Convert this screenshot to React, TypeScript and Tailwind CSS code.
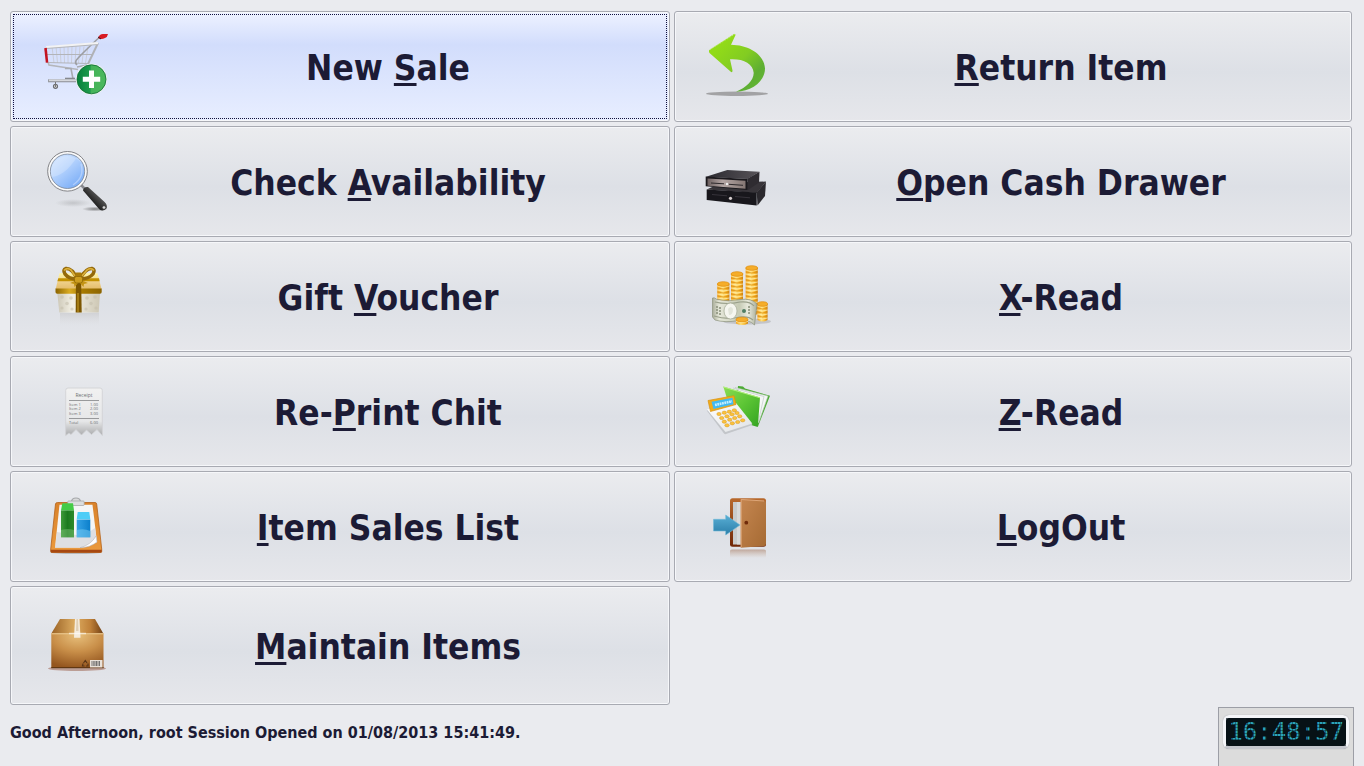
import type { ReactNode } from 'react';
import clsx from 'clsx';

function Icon({ children }: { children: ReactNode }) {
  return (
    <svg viewBox="0 0 66 65" className="w-[66px] h-[65px] shrink-0 overflow-visible" aria-hidden="true">
      {children}
    </svg>
  );
}

function CartIcon() {
  return (
    <Icon>
      <defs>
        <linearGradient id="cartPlus" x1="0" x2="1">
          <stop offset="0" stopColor="#07803b" />
          <stop offset="0.45" stopColor="#1f9c4c" />
          <stop offset="0.5" stopColor="#45b35a" />
          <stop offset="1" stopColor="#4cb95c" />
        </linearGradient>
      </defs>
      <g fill="none" strokeWidth="0.8">
        {[9, 13, 17, 21, 25, 29, 33, 37, 41, 45].map((x) => (
          <path key={x} d={`M${x} 12.5L${x - (x - 25) / 8} 29`} stroke="#c6c8ce" />
        ))}
        <path d="M4 20.5H50M4 28.5L45 29.5" stroke="#b2b4b9" strokeWidth="1.2" />
        <path d="M5 28L6 31L35 35.5" stroke="#b4b6bb" strokeWidth="1.6" />
        <path d="M55 9L45 30" stroke="#b0b2b7" strokeWidth="2" />
        <path d="M58 2C52 7 44 15 38 21C33 26 31 28 34 31" stroke="#9c9ea3" strokeWidth="1.6" />
        <path d="M22 34.5H28L30 45M34 33L44 31" stroke="#a8aaaf" strokeWidth="1.6" />
        <path d="M22 44.5H32" stroke="#85888e" strokeWidth="1.6" />
      </g>
      <path d="M3 13.7L55 9.7" stroke="#b4b6bb" strokeWidth="2.6" />
      <path d="M3 13L55 9" stroke="#f3f3f4" strokeWidth="1.8" />
      <path d="M5 46.8H36" stroke="#989ba1" strokeWidth="3" />
      <path d="M6 46.3H36" stroke="#d6d8dd" strokeWidth="1.6" />
      <path d="M1.2 14.2L3.8 13.8L5.3 28.4L2.8 28.8Z" fill="#c31320" />
      <path d="M55 4Q56.5 0 60 0H65Q64.5 3 62 4Q58 6 55 4Z" fill="#d81a22" />
      <path d="M55 3L58 5" stroke="#3c1a20" />
      <circle cx="12.5" cy="52.3" r="2" fill="#e6e6e6" stroke="#6b6d72" strokeWidth="1.2" />
      <path d="M12.5 48V53" stroke="#777" />
      <circle cx="48.5" cy="45.3" r="15.6" fill="#eef3ee" />
      <circle cx="48.5" cy="45.3" r="14.5" fill="url(#cartPlus)" stroke="#0c6b31" strokeWidth="0.8" />
      <path d="M46 36.5H51V42.7H57.2V47.7H51V54H46V47.7H39.8V42.7H46Z" fill="#fff" />
    </Icon>
  );
}

function SearchIcon() {
  return (
    <Icon>
      <defs>
        <linearGradient id="lens" x1="0" y1="0" x2="0.8" y2="1">
          <stop offset="0" stopColor="#dcebff" />
          <stop offset="0.45" stopColor="#b4d2fd" />
          <stop offset="1" stopColor="#72a8f6" />
        </linearGradient>
        <linearGradient id="lensHandle" x1="0" y1="1" x2="1" y2="0">
          <stop offset="0.3" stopColor="#111" />
          <stop offset="0.6" stopColor="#4c4c4c" />
          <stop offset="1" stopColor="#1c1c1c" />
        </linearGradient>
        <radialGradient id="lensShadow">
          <stop offset="0" stopColor="#555" stopOpacity="0.7" />
          <stop offset="1" stopColor="#555" stopOpacity="0" />
        </radialGradient>
      </defs>
      <ellipse cx="30" cy="54" rx="18" ry="4" fill="url(#lensShadow)" opacity="0.3" />
      <ellipse cx="52" cy="60" rx="13" ry="2.5" fill="url(#lensShadow)" />
      <path d="M38 36L43 41" stroke="#888a90" strokeWidth="2.5" />
      <path d="M40 41.5Q40.5 37.5 45 38L61 52.5Q65 56 63.5 59.5Q60 63 56.5 60.5Z" fill="url(#lensHandle)" />
      <circle cx="61" cy="58.5" r="1.8" fill="#d8d8d8" stroke="#333" strokeWidth="0.8" />
      <circle cx="24.5" cy="22.3" r="18.4" fill="url(#lens)" stroke="#fbfbfb" strokeWidth="2.4" />
      <circle cx="24.5" cy="22.3" r="19.8" fill="none" stroke="#77777a" strokeWidth="0.9" />
      <circle cx="24.5" cy="22.3" r="17.2" fill="none" stroke="#7b8594" strokeWidth="0.8" />
      <path d="M8 28Q22 27 34 8Q40 14 41 20A17 17 0 0 0 8 20Z" fill="#fff" opacity="0.22" />
      <path d="M38 15Q42 28 30 36" fill="none" stroke="#d5e6ff" strokeWidth="1.5" opacity="0.5" />
    </Icon>
  );
}

function GiftIcon() {
  return (
    <Icon>
      <defs>
        <linearGradient id="giftGold" x1="0" x2="1">
          <stop offset="0" stopColor="#8c6400" />
          <stop offset="0.3" stopColor="#d9ab22" />
          <stop offset="0.6" stopColor="#a67900" />
          <stop offset="1" stopColor="#8d6500" />
        </linearGradient>
        <linearGradient id="giftLid" x1="0" y1="0" x2="0" y2="1">
          <stop offset="0" stopColor="#fff6a8" />
          <stop offset="0.5" stopColor="#f0d28c" />
          <stop offset="1" stopColor="#e4bd6c" />
        </linearGradient>
        <linearGradient id="giftBody" x1="0" x2="1">
          <stop offset="0" stopColor="#cdc8b8" />
          <stop offset="0.35" stopColor="#f3f0e5" />
          <stop offset="1" stopColor="#cdc7b4" />
        </linearGradient>
        <linearGradient id="giftReflect" x1="0" y1="0" x2="0" y2="1">
          <stop offset="0" stopColor="#c8c8ca" stopOpacity="0.6" />
          <stop offset="0.8" stopColor="#d8d8d8" stopOpacity="0" />
        </linearGradient>
      </defs>
      <path d="M17 49H56V64H17Z" fill="url(#giftReflect)" />
      <path d="M14.3 29H57L55.7 48.5H16.3Z" fill="url(#giftBody)" />
      <g fill="#c6c0ae" opacity="0.6">
        <circle cx="19" cy="33" r="1.8" />
        <circle cx="28" cy="34" r="1.8" />
        <circle cx="24" cy="39.5" r="1.8" />
        <circle cx="19" cy="44" r="1.6" />
        <circle cx="29" cy="45" r="1.6" />
        <circle cx="44" cy="34" r="1.8" />
        <circle cx="52" cy="33" r="1.8" />
        <circle cx="48" cy="39.5" r="1.8" />
        <circle cx="43" cy="45" r="1.6" />
        <circle cx="53" cy="44" r="1.6" />
      </g>
      <path d="M16.5 9.3H54.5L58.5 25H12.7Z" fill="url(#giftLid)" />
      <path d="M15.3 14.2H56L56.7 17.2H14.4Z" fill="#c29100" />
      <path d="M12.5 24.5H58.7V28Q58.7 29.8 57 29.8H14.2Q12.5 29.8 12.5 28Z" fill="url(#giftGold)" />
      <path d="M33 9H38L38.7 48.5H32.7Z" fill="#7c5600" />
      <path d="M34 29H36V48H34Z" fill="#a27a14" />
      <g fill="none" stroke="#94690a" strokeWidth="3.6">
        <path d="M34 14.5Q29 4 23 4.5Q19.5 5.5 22 10Q25.500 15 34 15" />
        <path d="M37 14.5Q43 4 49 4.5Q52.5 5.5 50 10Q46 15 37 15" />
      </g>
      <g fill="none" stroke="#dbb03a" strokeWidth="1.6">
        <path d="M21 6.5Q24 3 28 6L32 12M51 6.5Q48 3 44 6L39 12" />
      </g>
      <path d="M34 16L27 19L31 20L31.5 23L36 18L40.5 23L41 20L45 19L38 16Z" fill="#c49415" />
      <rect x="32.5" y="8.5" width="6" height="4" rx="1" fill="#a87a08" />
      <rect x="31.5" y="12.5" width="8" height="6.5" rx="2" fill="#cc9d1f" stroke="#8f6806" strokeWidth="0.8" />
    </Icon>
  );
}

function ReceiptIcon() {
  return (
    <Icon>
      <defs>
        <linearGradient id="receipt" x1="0" y1="0" x2="0" y2="1">
          <stop offset="0" stopColor="#f1f1f1" />
          <stop offset="0.7" stopColor="#e6e7e8" />
          <stop offset="1" stopColor="#a9aaac" />
        </linearGradient>
      </defs>
      <path
        d="M25 9H57Q59.3 9 59.3 11.5V56.5L54 50.5L48.5 55.5L43.5 51L38.5 56L33 50.5L28 55.5L26 54L22.7 56.5V11.5Q22.7 9 25 9Z"
        fill="url(#receipt)"
        stroke="#cfd0d3"
        strokeWidth="0.8"
      />
      <path d="M26 21.5H56M26 39.5H56" stroke="#8e9092" strokeWidth="0.9" />
      <g fill="#6d6f72" fontFamily="Open Sans, sans-serif">
        <text x="41" y="18" fontSize="5" textAnchor="middle">Receipt</text>
        <g fontSize="4">
          <text x="26" y="27">Item 1</text>
          <text x="55" y="27" textAnchor="end">1.00</text>
          <text x="26" y="31">Item 2</text>
          <text x="55" y="31" textAnchor="end">2.00</text>
          <text x="26" y="36">Item 3</text>
          <text x="55" y="36" textAnchor="end">3.00</text>
          <text x="26" y="45">Total</text>
          <text x="55" y="45" textAnchor="end">6.00</text>
        </g>
      </g>
    </Icon>
  );
}

function SalesListIcon() {
  return (
    <Icon>
      <defs>
        <linearGradient id="board" x1="0" y1="0" x2="0" y2="1">
          <stop offset="0" stopColor="#d9822a" />
          <stop offset="1" stopColor="#eb9a3e" />
        </linearGradient>
        <linearGradient id="greenBar" x1="0" x2="1">
          <stop offset="0" stopColor="#3f9a3a" />
          <stop offset="0.5" stopColor="#1d7a1f" />
          <stop offset="1" stopColor="#2e8a2b" />
        </linearGradient>
        <linearGradient id="blueBar" x1="0" x2="1">
          <stop offset="0" stopColor="#36a3e6" />
          <stop offset="1" stopColor="#0b7fcb" />
        </linearGradient>
      </defs>
      <ellipse cx="33" cy="58.5" rx="26" ry="1.5" fill="#777" opacity="0.4" />
      <path d="M14.5 8.5H52Q53.5 8.5 53.7 10L58.7 55V57.5Q58.7 58.5 57.5 58.5H9Q7.7 58.5 7.7 57.5V55L12.5 10Q12.7 8.5 14.5 8.5Z" fill="url(#board)" stroke="#b4621a" strokeWidth="0.8" />
      <path d="M7.7 55.8H58.7V57.5Q58.7 58.5 57.5 58.5H9Q7.7 58.5 7.7 57.5Z" fill="#a74812" />
      <path d="M16.5 10.7H49.5L54 48Q46 53 37 53.7H12Z" fill="#f4f5f6" />
      <path d="M14 38L12 53.7H37Q46 53 54 48L52 34L40 42Z" fill="#cfd1d6" opacity="0.6" />
      <path d="M53 42L54 48Q47 53.5 37 53.7Q48 51 53 42Z" fill="#fff" stroke="#b6b6bb" strokeWidth="0.6" />
      <path d="M28.5 7.5Q29 4 33 4Q37 4 37.5 7.5Z" fill="#d9dadb" stroke="#a6a8aa" strokeWidth="1.2" />
      <rect x="24.7" y="7" width="16.5" height="4.5" rx="1" fill="#dbddde" stroke="#a0a2a4" strokeWidth="0.7" />
      <path d="M18 16.3H31V43.3H18Z" fill="url(#greenBar)" />
      <path d="M19.3 9.3H30L31 16.3H18Z" fill="#44cb46" />
      <path d="M18 36Q25 34 31 36V43.3H18Z" fill="#8fce88" opacity="0.4" />
      <path d="M33.7 25.5H47.3V43.3H33.7Z" fill="url(#blueBar)" />
      <path d="M34.7 18H46.3L47.3 25.3H33.7Z" fill="#4fcdf7" />
      <path d="M33.7 36Q41 34 47.3 37V43.3H33.7Z" fill="#7ed0f4" opacity="0.5" />
    </Icon>
  );
}

function BoxIcon() {
  return (
    <Icon>
      <defs>
        <radialGradient id="boxFront" cx="0.5" cy="0.05" r="0.95">
          <stop offset="0" stopColor="#e8c07c" />
          <stop offset="0.5" stopColor="#c98f49" />
          <stop offset="1" stopColor="#94561f" />
        </radialGradient>
        <linearGradient id="boxTop" x1="0" x2="1">
          <stop offset="0" stopColor="#9a6225" />
          <stop offset="0.45" stopColor="#dcab60" />
          <stop offset="0.75" stopColor="#c08139" />
          <stop offset="1" stopColor="#703f14" />
        </linearGradient>
      </defs>
      <ellipse cx="34" cy="55.5" rx="29" ry="2.5" fill="#8d4a30" opacity="0.45" />
      <path d="M17 6H52L60.3 20.5H8.3Z" fill="url(#boxTop)" />
      <path d="M8.3 20.3H60.5V55H8.3Z" fill="url(#boxFront)" />
      <path d="M8.3 20.8H60.5" stroke="#ecc88e" strokeWidth="1" />
      <path d="M8.3 54.7H60.5" stroke="#55300f" strokeWidth="1" />
      <path d="M32 6H36.5L37.5 24.7H31Z" fill="#f5ecdd" />
      <path d="M33.5 6H35L35.5 18H33Z" fill="#e0cfb5" />
      <path d="M26 20.5H43" stroke="#fff" strokeWidth="1.5" opacity="0.6" />
      <rect x="47" y="47" width="12.5" height="7.5" fill="#e9e2da" />
      <path d="M49 48V53M50.8 48V53M52 48V53M53.5 48V53M55 48V53M56.5 48V53" stroke="#666" strokeWidth="0.9" />
      <path d="M40.5 50L42.3 47.5L44 50M45 50.5L45 53H43M41.5 53H39.5L40 50.5" fill="none" stroke="#5a3516" strokeWidth="1.2" />
    </Icon>
  );
}

function ReturnIcon() {
  return (
    <Icon>
      <defs>
        <linearGradient id="returnArrow" x1="0.2" y1="0.2" x2="0.9" y2="0.9">
          <stop offset="0" stopColor="#92db18" />
          <stop offset="0.45" stopColor="#82cc22" />
          <stop offset="0.8" stopColor="#5eae33" />
          <stop offset="1" stopColor="#62b535" />
        </linearGradient>
      </defs>
      <ellipse cx="30" cy="59.7" rx="31" ry="2.2" fill="#a2a2a4" />
      <path
        d="M2.3 16L27 0Q29 -0.5 28.3 1.5L24 10.7C42 11 57 20 58 34.5C58 47 45 57.5 29 57.7C39 53.5 46.5 47 46.7 39C46 29 36 24.5 23 25.2L25.5 36.5Q25.5 39.5 23.5 37.5L2.5 19Q1.5 17 2.3 16Z"
        fill="url(#returnArrow)"
      />
      <path d="M3 15.5L28 0" stroke="#c9ee8c" strokeWidth="0.9" strokeDasharray="1 1" />
    </Icon>
  );
}

function DrawerIcon() {
  return (
    <Icon>
      <defs>
        <linearGradient id="drawerSteel" x1="0" x2="1">
          <stop offset="0" stopColor="#6d6161" />
          <stop offset="0.4" stopColor="#b3a5a3" />
          <stop offset="1" stopColor="#857774" />
        </linearGradient>
        <linearGradient id="drawerTop" x1="0" x2="1">
          <stop offset="0" stopColor="#2b2a30" />
          <stop offset="1" stopColor="#575358" />
        </linearGradient>
      </defs>
      <path d="M-0.3 40.5L14 34L59 32.5L49.7 44Z" fill="#38353a" />
      <path d="M49.7 43.5L59 32.5L58 47L50.5 56.5Z" fill="#2b292e" />
      <path d="M-0.3 40.5L49.7 43.5V56.5L-0.3 51Z" fill="#18171c" />
      <path d="M5 45.5L20 46.8M28 47.5L43 48.8" stroke="#36333a" strokeWidth="1" />
      <circle cx="23.5" cy="49.3" r="1.6" fill="#d8d0d0" />
      <path d="M-1 27.7L20.3 21L52.5 22.7L40.3 30Z" fill="url(#drawerTop)" />
      <path d="M40.3 29.7L52.5 22.7L52 33.5L41 41Z" fill="#2f2c31" />
      <path d="M-1.3 27.5L40.5 30V41L-1.3 37.3Z" fill="#1b191d" />
      <path d="M0.5 29.5L38.5 31.8V39.8L0.5 36.8Z" fill="url(#drawerSteel)" />
      <path d="M4 34L17 34.8M22 35.3L36 36.3" stroke="#2d292c" strokeWidth="1" />
      <circle cx="20" cy="35" r="1.2" fill="#eee" />
    </Icon>
  );
}

const coinStacks = [
  { x: 38.7, y: 2, h: 48 },
  { x: 24, y: 8, h: 34 },
  { x: 10.3, y: 18, h: 22 },
];

function CoinStack({ x, y, h, w = 12 }: { x: number; y: number; h: number; w?: number }) {
  return (
    <g>
      <path d={`M${x} ${y + 2}V${y + h}Q${x + w / 2} ${y + h + 3} ${x + w} ${y + h}V${y + 2}Z`} fill="url(#coinSide)" />
      {Array.from({ length: Math.floor((h - 3) / 2) }, (_, i) => (
        <path
          key={i}
          d={`M${x} ${y + 4 + i * 2}Q${x + w / 2} ${y + 6 + i * 2} ${x + w} ${y + 4 + i * 2}`}
          fill="none"
          stroke={i % 2 ? '#dd8f12' : '#fff0b0'}
          strokeWidth="0.8"
        />
      ))}
      <ellipse cx={x + w / 2} cy={y + 2} rx={w / 2} ry="2.3" fill="#f5ad2a" stroke="#e08c0c" strokeWidth="0.7" />
    </g>
  );
}

function MoneyIcon() {
  return (
    <Icon>
      <defs>
        <linearGradient id="coinSide" x1="0" x2="1">
          <stop offset="0" stopColor="#f3a11a" />
          <stop offset="0.4" stopColor="#ffe079" />
          <stop offset="0.75" stopColor="#f9b92f" />
          <stop offset="1" stopColor="#c97a0b" />
        </linearGradient>
        <linearGradient id="bill" x1="0" x2="1">
          <stop offset="0" stopColor="#a8ac99" />
          <stop offset="0.15" stopColor="#e6e8da" />
          <stop offset="0.6" stopColor="#c5cab4" />
          <stop offset="0.8" stopColor="#e9ebde" />
          <stop offset="1" stopColor="#aaae99" />
        </linearGradient>
      </defs>
      <ellipse cx="40" cy="57.5" rx="24" ry="3" fill="#8b8d92" opacity="0.35" />
      {coinStacks.map((s) => (
        <CoinStack key={s.x} {...s} />
      ))}
      <CoinStack x={50.5} y={38} h={18} w={10} />
      <path d="M5.5 34Q7 33 10 35.5Q22 38 33 35.5Q45 34 50 40L47.5 61Q42 55 32 56.5Q18 59 8 56L5.5 53Z" fill="url(#bill)" stroke="#8d927c" strokeWidth="0.7" />
      <path d="M8 38Q20 41 33 38Q43 37 47 42M7 52Q20 56 33 53Q42 52 46 56" fill="none" stroke="#9aa08b" strokeWidth="1.2" />
      <ellipse cx="23.5" cy="47" rx="6.5" ry="8" fill="#f5f6ef" stroke="#a1a690" strokeWidth="0.7" />
      <path d="M21 45Q24 41 26 45Q26 51 22 51Z" fill="#e2e5da" />
      <circle cx="37" cy="47" r="2" fill="#507d62" />
      <path d="M10 42V50M13 43V51M42 42V51" stroke="#888e7a" strokeWidth="1.5" strokeDasharray="2 1" />
      <CoinStack x={29} y={53.5} h={6} />
    </Icon>
  );
}

const calcKeys = [
  [12, 35], [17.3, 33.7], [22.3, 32.7], [27.3, 31.3],
  [14.7, 39], [20, 37.3], [25, 35.3], [30, 34],
  [17.3, 42.7], [22.7, 40.7], [27.7, 39], [32.7, 37.3],
  [20, 46.3], [25.3, 44.3], [30.7, 43], [35.7, 41.3],
];

function CalculatorIcon() {
  return (
    <Icon>
      <defs>
        <linearGradient id="folder" x1="0" y1="0" x2="1" y2="1">
          <stop offset="0" stopColor="#8bdd52" />
          <stop offset="0.5" stopColor="#5cc535" />
          <stop offset="1" stopColor="#33a322" />
        </linearGradient>
        <linearGradient id="calcBody" x1="0" y1="0" x2="1" y2="1">
          <stop offset="0" stopColor="#ffffff" />
          <stop offset="1" stopColor="#dfe2e5" />
        </linearGradient>
      </defs>
      <path d="M31 7L36 7.5L38 9.5L63 16.7L51 47.5L30 15Z" fill="#4cab34" />
      <path d="M28 8.5L61 17L51.5 44L40 20Z" fill="#f4f7f6" stroke="#b5c7b5" strokeWidth="0.6" />
      <path d="M26 9L57 17.5L51.5 42" fill="none" stroke="#c8cfce" strokeWidth="0.8" />
      <path d="M16.3 7.5L53 18.5L50.8 48L44 46L22 26Z" fill="url(#folder)" />
      <path d="M16.3 8L53 18.8" stroke="#b4f07f" strokeWidth="1" />
      <path d="M-0.3 31.5L29 25L45.5 46L19 55Q18 55.5 17 54.5Z" fill="#c3c6ca" />
      <path d="M0 30.5L29 24L45.3 44.5L18.5 53Z" fill="url(#calcBody)" />
      <path d="M1 21.5L27 16.7L29 25.5L3.5 32.5Z" fill="#f1ab19" stroke="#d8900f" strokeWidth="0.7" />
      <path d="M4.5 22.8L25.5 18.8L26.5 25.3L6.5 30Z" fill="#42b9f2" />
      <path d="M8 26L25 22.3" stroke="#c4efff" strokeWidth="2.6" strokeDasharray="1.8 0.6" />
      {calcKeys.map(([x, y]) => (
        <ellipse key={`${x}-${y}`} cx={x} cy={y} rx="2.2" ry="1.6" fill="#fbc23c" stroke="#d9981c" strokeWidth="0.5" />
      ))}
    </Icon>
  );
}

function DoorIcon() {
  return (
    <Icon>
      <defs>
        <linearGradient id="door" x1="0" y1="0" x2="1" y2="1">
          <stop offset="0" stopColor="#c58650" />
          <stop offset="1" stopColor="#a56a33" />
        </linearGradient>
        <linearGradient id="doorFrame" x1="0" y1="0" x2="0" y2="1">
          <stop offset="0" stopColor="#b8692c" />
          <stop offset="1" stopColor="#702606" />
        </linearGradient>
        <linearGradient id="doorArrow" x1="0" y1="0" x2="0" y2="1">
          <stop offset="0" stopColor="#59afd5" />
          <stop offset="1" stopColor="#2b7ea9" />
        </linearGradient>
        <linearGradient id="doorReflect" x1="0" y1="0" x2="0" y2="1">
          <stop offset="0" stopColor="#a98069" stopOpacity="0.6" />
          <stop offset="1" stopColor="#c9a890" stopOpacity="0" />
        </linearGradient>
      </defs>
      <path d="M23 64V57Q23 55.5 25 55.5H57Q59 55.5 59 57V64Z" fill="url(#doorReflect)" />
      <rect x="23" y="4.3" width="36" height="48.5" rx="2.5" fill="url(#doorFrame)" />
      <rect x="26" y="8" width="10" height="42.5" fill="#c9cbcb" />
      <path d="M30 8H34V50.5H30Z" fill="#d8dada" />
      <path d="M33.7 5L57 6.5Q59 6.5 59 9V49.5Q59 52 57 52L33.7 53.7Z" fill="url(#door)" />
      <path d="M34.2 53V5.5L57 7" fill="none" stroke="#dda678" strokeWidth="1" />
      <circle cx="39.3" cy="28.7" r="1.9" fill="#702b0b" />
      <path d="M6.5 25.3H18.7V21L33 31L18.7 41V37H6.5Z" fill="url(#doorArrow)" stroke="#6fb9d8" strokeWidth="0.6" />
    </Icon>
  );
}

type MenuItem = { before?: string; hotkey: string; after: string; icon: ReactNode };

const items: MenuItem[] = [
  { before: 'New ', hotkey: 'S', after: 'ale', icon: <CartIcon /> },
  { hotkey: 'R', after: 'eturn Item', icon: <ReturnIcon /> },
  { before: 'Check ', hotkey: 'A', after: 'vailability', icon: <SearchIcon /> },
  { hotkey: 'O', after: 'pen Cash Drawer', icon: <DrawerIcon /> },
  { before: 'Gift ', hotkey: 'V', after: 'oucher', icon: <GiftIcon /> },
  { hotkey: 'X', after: '-Read', icon: <MoneyIcon /> },
  { before: 'Re-', hotkey: 'P', after: 'rint Chit', icon: <ReceiptIcon /> },
  { hotkey: 'Z', after: '-Read', icon: <CalculatorIcon /> },
  { hotkey: 'I', after: 'tem Sales List', icon: <SalesListIcon /> },
  { hotkey: 'L', after: 'ogOut', icon: <DoorIcon /> },
  { hotkey: 'M', after: 'aintain Items', icon: <BoxIcon /> },
];

function MenuButton({ item, active, tall }: { item: MenuItem; active: boolean; tall: boolean }) {
  return (
    <button
      type="button"
      accessKey={item.hotkey.toLowerCase()}
      className={clsx(
        'flex items-center pl-8 pr-0.5 rounded-[3px] border border-[#a8aab2] shadow-[inset_0_0_0_1px_#f6f7fa]',
        tall ? 'h-[119px]' : 'h-[111px]',
        active
          ? 'bg-linear-to-b from-[#eef2ff] via-[#d2ddfc] via-30% to-[#e8eeff] outline-1 outline-dotted outline-[#10103c] -outline-offset-4'
          : 'bg-linear-to-b from-[#ebecef] via-[#dde0e6] via-55% to-[#e6e7eb]',
      )}
    >
      {item.icon}
      <span className="flex-1 pt-0.5 text-center text-[35px] leading-10 font-bold whitespace-pre">
        {item.before}
        <span className="underline decoration-3 underline-offset-3 [text-decoration-skip-ink:none]">{item.hotkey}</span>
        {item.after}
      </span>
    </button>
  );
}

function Clock({ time }: { time: string }) {
  return (
    <div className="self-stretch border border-b-0 border-[#9c9ea6] bg-[#dcdcdc] px-1 pt-[7px]">
      <div className="rounded-md border-3 border-[#f4f5f8] border-b-[#c4c6cd] bg-[#071116] shadow-[0_0_1px_#8a8c94]">
        <time className="relative block px-0.5 font-['DejaVu_Sans_Mono',monospace] text-2xl leading-7 text-[#2aa3ba]">
          {time}
          {/* dot matrix grid */}
          <span className="absolute inset-0 bg-[repeating-linear-gradient(0deg,#07111666_0_1px,transparent_1px_3px),repeating-linear-gradient(90deg,#07111666_0_1px,transparent_1px_3px)]" />
        </time>
      </div>
    </div>
  );
}

export default function App() {
  return (
    <div className="flex flex-col min-h-screen bg-[#eaebef] text-[#1c1b35] font-['DejaVu_Sans_Condensed','Noto_Sans',sans-serif]">
      <main className="grid grid-cols-[660fr_678fr] gap-1 pt-[11px] pl-2.5 pr-3">
        {items.map((item, i) => (
          <MenuButton key={item.hotkey} item={item} active={i === 0} tall={i === items.length - 1} />
        ))}
      </main>

      {/* Status bar */}
      <footer className="flex flex-1 items-start justify-between px-2.5 pt-0.5">
        <p className="pt-3.5 text-base font-bold">Good Afternoon, root Session Opened on 01/08/2013 15:41:49.</p>
        <Clock time="16:48:57" />
      </footer>
    </div>
  );
}
